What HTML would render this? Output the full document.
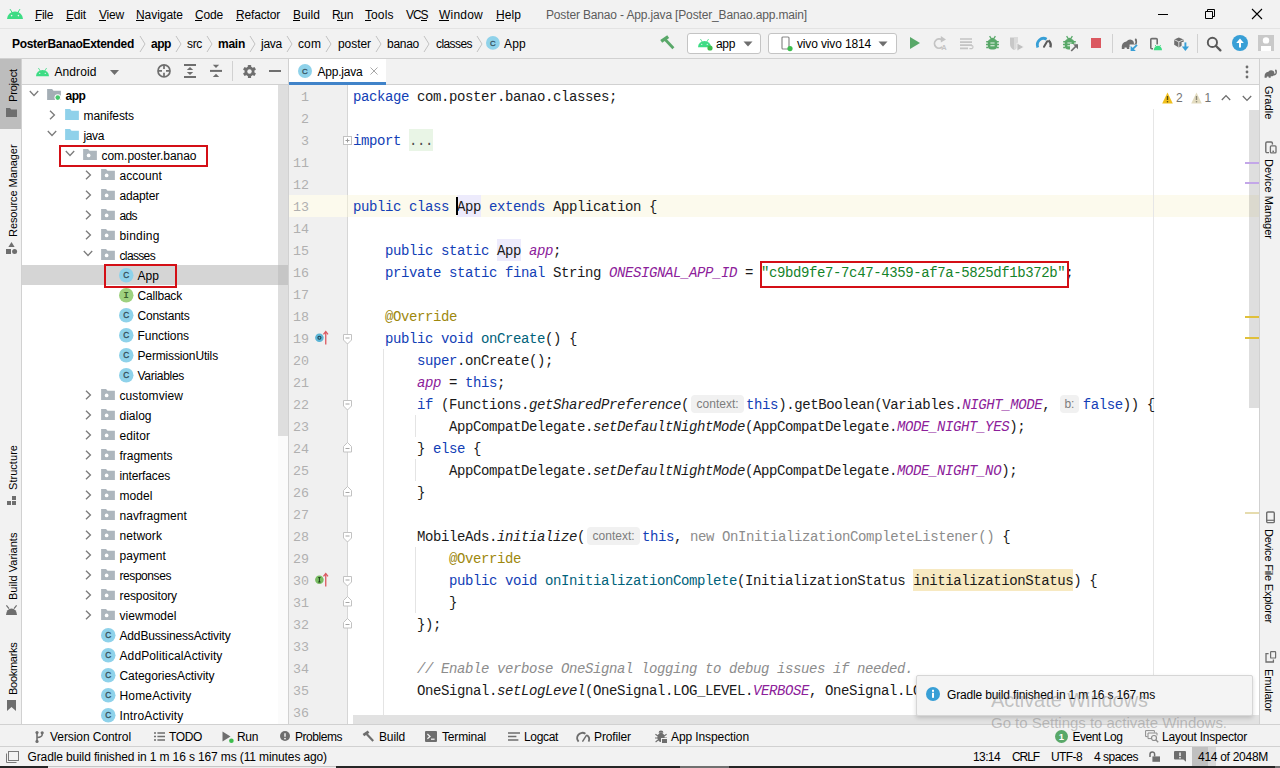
<!DOCTYPE html>
<html><head><meta charset="utf-8"><title>Poster Banao - App.java</title>
<style>
html,body{margin:0;padding:0;}
body{width:1280px;height:768px;overflow:hidden;background:#f2f2f2;position:relative;font-family:'Liberation Sans',sans-serif;font-size:12px;color:#000;}
.t{position:absolute;white-space:pre;line-height:20px;height:20px;}
.b{font-weight:bold;}
.u{text-decoration:underline;text-underline-offset:1px;text-decoration-thickness:1px;}
svg{position:absolute;overflow:visible;}
.cl{position:absolute;left:353px;height:22px;line-height:22px;white-space:pre;font-family:'Liberation Mono',monospace;font-size:14px;letter-spacing:-0.4px;color:#1a1a1a;}
.ln{position:absolute;left:289px;width:20px;text-align:right;height:22px;line-height:22px;font-family:'Liberation Mono',monospace;font-size:13.333px;color:#b0b0b0;}
.k{color:#1240b6;}
.s{color:#14832a;}
.f{color:#8c209a;font-style:italic;}
.a{color:#9e880d;}
.m{color:#00627a;}
.c{color:#8c8c8c;font-style:italic;}
.i{font-style:italic;}
.g{color:#8c8c8c;}
.hl{background:#edebfc;display:inline-block;height:22px;}
.hw{background:#f7e9c1;display:inline-block;height:22px;}
.fd{background:#e9f5e6;display:inline-block;height:22px;color:#4d4d4d;}
.g2{color:#4d4d4d;}
.ih{display:inline-block;box-sizing:border-box;height:18px;line-height:18px;vertical-align:top;margin-top:1.5px;background:#f1f1f1;border-radius:4px;color:#7d7d7d;font-family:'Liberation Sans',sans-serif;font-size:12px;text-align:center;overflow:hidden;letter-spacing:0;}
.vt{position:absolute;white-space:pre;line-height:20px;height:20px;transform-origin:0 0;}
</style></head><body>
<div style="position:absolute;left:0px;top:0px;width:1280px;height:28px;background:#f2f2f2;"></div>
<div style="position:absolute;left:0px;top:28px;width:1280px;height:1px;background:#e3e3e3;"></div>
<div style="position:absolute;left:0px;top:58px;width:1280px;height:1px;background:#d1d1d1;"></div>
<div style="position:absolute;left:0px;top:59px;width:21px;height:665px;background:#f2f2f2;"></div>
<div style="position:absolute;left:0px;top:59px;width:21px;height:70px;background:#bdbdbd;"></div>
<div style="position:absolute;left:21px;top:59px;width:1px;height:665px;background:#d1d1d1;"></div>
<div style="position:absolute;left:22px;top:85px;width:266px;height:639px;background:#ffffff;"></div>
<div style="position:absolute;left:22px;top:84px;width:266px;height:1px;background:#d1d1d1;"></div>
<div style="position:absolute;left:278px;top:85px;width:10px;height:639px;background:#fbfbfb;"></div>
<div style="position:absolute;left:278px;top:85px;width:10px;height:351px;background:#dedede;"></div>
<div style="position:absolute;left:288px;top:59px;width:1px;height:665px;background:#d1d1d1;"></div>
<div style="position:absolute;left:289px;top:59px;width:970px;height:26px;background:#f2f2f2;"></div>
<div style="position:absolute;left:289px;top:84px;width:970px;height:1px;background:#d1d1d1;"></div>
<div style="position:absolute;left:289px;top:59px;width:97px;height:26px;background:#ffffff;"></div>
<div style="position:absolute;left:289px;top:82px;width:97px;height:3px;background:#4083c9;"></div>
<div style="position:absolute;left:289px;top:85px;width:970px;height:639px;background:#ffffff;"></div>
<div style="position:absolute;left:289px;top:85px;width:58px;height:639px;background:#f0f0f0;"></div>
<div style="position:absolute;left:347px;top:85px;width:1px;height:639px;background:#d6d6d6;"></div>
<div style="position:absolute;left:289px;top:195px;width:970px;height:22px;background:#fcfaed;"></div>
<div style="position:absolute;left:347px;top:195px;width:1px;height:22px;background:#e8e6d8;"></div>
<div style="position:absolute;left:1153px;top:109px;width:1px;height:615px;background:#e6e6e6;"></div>
<div style="position:absolute;left:1259px;top:59px;width:1px;height:665px;background:#d1d1d1;"></div>
<div style="position:absolute;left:1260px;top:59px;width:20px;height:665px;background:#f2f2f2;"></div>
<div style="position:absolute;left:0px;top:724px;width:1280px;height:1px;background:#d1d1d1;"></div>
<div style="position:absolute;left:0px;top:725px;width:1280px;height:21px;background:#f2f2f2;"></div>
<div style="position:absolute;left:0px;top:746px;width:1280px;height:1px;background:#d1d1d1;"></div>
<div style="position:absolute;left:0px;top:747px;width:1280px;height:19px;background:#f2f2f2;"></div>
<div style="position:absolute;left:0px;top:766px;width:1280px;height:2px;background:#262626;"></div>
<div style="position:absolute;left:48px;top:766px;width:288px;height:1px;background:#c6c6c6;"></div>
<div style="position:absolute;left:48px;top:767px;width:288px;height:1px;background:#ececec;"></div>
<div style="position:absolute;left:680px;top:766px;width:49px;height:2px;background:#707070;"></div>
<div style="position:absolute;left:1275px;top:766px;width:5px;height:2px;background:#707070;"></div>
<svg style="left:7px;top:9px" width="16" height="10.0" viewBox="0 0 16 10"><path d="M0 10 A8 7.6 0 0 1 16 10 Z" fill="#3ddc84"/><path d="M3.2 0.4 L5.2 3.6 M12.8 0.4 L10.8 3.6" stroke="#3ddc84" stroke-width="1" stroke-linecap="round"/><circle cx="4.6" cy="6.6" r="0.8" fill="#f2f2f2"/><circle cx="11.4" cy="6.6" r="0.8" fill="#f2f2f2"/></svg>
<span class="t" style="left:35px;top:4.5px;letter-spacing:-0.336px;">File</span>
<span class="t" style="left:66px;top:4.5px;letter-spacing:-0.172px;">Edit</span>
<span class="t" style="left:99px;top:4.5px;letter-spacing:-0.199px;">View</span>
<span class="t" style="left:136px;top:4.5px;letter-spacing:-0.047px;">Navigate</span>
<span class="t" style="left:195px;top:4.5px;letter-spacing:-0.172px;">Code</span>
<span class="t" style="left:236px;top:4.5px;letter-spacing:-0.170px;">Refactor</span>
<span class="t" style="left:293px;top:4.5px;letter-spacing:0.062px;">Build</span>
<span class="t" style="left:332px;top:4.5px;letter-spacing:-0.339px;">Run</span>
<span class="t" style="left:365px;top:4.5px;letter-spacing:0.097px;">Tools</span>
<span class="t" style="left:406px;top:4.5px;letter-spacing:-1.062px;">VCS</span>
<span class="t" style="left:439px;top:4.5px;letter-spacing:0.219px;">Window</span>
<span class="t" style="left:496px;top:4.5px;letter-spacing:0.078px;">Help</span>
<div style="position:absolute;left:35px;top:20.3px;width:6px;height:1px;background:#000;"></div>
<div style="position:absolute;left:66px;top:20.3px;width:6px;height:1px;background:#000;"></div>
<div style="position:absolute;left:99px;top:20.3px;width:7px;height:1px;background:#000;"></div>
<div style="position:absolute;left:136px;top:20.3px;width:8px;height:1px;background:#000;"></div>
<div style="position:absolute;left:195px;top:20.3px;width:7px;height:1px;background:#000;"></div>
<div style="position:absolute;left:236px;top:20.3px;width:7px;height:1px;background:#000;"></div>
<div style="position:absolute;left:293px;top:20.3px;width:7px;height:1px;background:#000;"></div>
<div style="position:absolute;left:337px;top:20.3px;width:6px;height:1px;background:#000;"></div>
<div style="position:absolute;left:365px;top:20.3px;width:6px;height:1px;background:#000;"></div>
<div style="position:absolute;left:421px;top:20.3px;width:6px;height:1px;background:#000;"></div>
<div style="position:absolute;left:439px;top:20.3px;width:10px;height:1px;background:#000;"></div>
<div style="position:absolute;left:496px;top:20.3px;width:8px;height:1px;background:#000;"></div>
<span class="t" style="left:546px;top:4.5px;letter-spacing:-0.153px;color:#5c5c5c;">Poster Banao - App.java [Poster_Banao.app.main]</span>
<svg style="left:1157px;top:9px" width="12" height="12" viewBox="0 0 12 12"><path d="M1 5.5 H11" stroke="#000" stroke-width="1"/></svg>
<svg style="left:1204px;top:8px" width="12" height="12" viewBox="0 0 12 12"><path d="M1.5 3.5 H8.5 V10.5 H1.5 Z M3.5 3.5 V1.5 H10.5 V8.5 H8.5" fill="none" stroke="#000" stroke-width="1"/></svg>
<svg style="left:1251px;top:8px" width="12" height="12" viewBox="0 0 12 12"><path d="M1 1 L11 11 M11 1 L1 11" stroke="#000" stroke-width="1.1"/></svg>
<span class="t b" style="left:12px;top:33.8px;letter-spacing:-0.318px;">PosterBanaoExtended</span>
<span class="t b" style="left:151px;top:33.8px;letter-spacing:-0.448px;">app</span>
<span class="t" style="left:187px;top:33.8px;letter-spacing:-0.333px;">src</span>
<span class="t b" style="left:218px;top:33.8px;letter-spacing:-0.254px;">main</span>
<span class="t" style="left:261px;top:33.8px;letter-spacing:-0.254px;">java</span>
<span class="t" style="left:298px;top:33.8px;letter-spacing:0.109px;">com</span>
<span class="t" style="left:338px;top:33.8px;letter-spacing:-0.060px;">poster</span>
<span class="t" style="left:387px;top:33.8px;letter-spacing:-0.275px;">banao</span>
<span class="t" style="left:436px;top:33.8px;letter-spacing:-0.574px;">classes</span>
<svg style="left:139px;top:35px" width="7" height="18" viewBox="0 0 7 18"><path d="M1 1 L6 9 L1 17" fill="none" stroke="#c2c2c2" stroke-width="1"/></svg>
<svg style="left:175px;top:35px" width="7" height="18" viewBox="0 0 7 18"><path d="M1 1 L6 9 L1 17" fill="none" stroke="#c2c2c2" stroke-width="1"/></svg>
<svg style="left:206px;top:35px" width="7" height="18" viewBox="0 0 7 18"><path d="M1 1 L6 9 L1 17" fill="none" stroke="#c2c2c2" stroke-width="1"/></svg>
<svg style="left:249px;top:35px" width="7" height="18" viewBox="0 0 7 18"><path d="M1 1 L6 9 L1 17" fill="none" stroke="#c2c2c2" stroke-width="1"/></svg>
<svg style="left:286px;top:35px" width="7" height="18" viewBox="0 0 7 18"><path d="M1 1 L6 9 L1 17" fill="none" stroke="#c2c2c2" stroke-width="1"/></svg>
<svg style="left:325px;top:35px" width="7" height="18" viewBox="0 0 7 18"><path d="M1 1 L6 9 L1 17" fill="none" stroke="#c2c2c2" stroke-width="1"/></svg>
<svg style="left:375px;top:35px" width="7" height="18" viewBox="0 0 7 18"><path d="M1 1 L6 9 L1 17" fill="none" stroke="#c2c2c2" stroke-width="1"/></svg>
<svg style="left:423px;top:35px" width="7" height="18" viewBox="0 0 7 18"><path d="M1 1 L6 9 L1 17" fill="none" stroke="#c2c2c2" stroke-width="1"/></svg>
<svg style="left:476px;top:35px" width="7" height="18" viewBox="0 0 7 18"><path d="M1 1 L6 9 L1 17" fill="none" stroke="#c2c2c2" stroke-width="1"/></svg>
<svg style="left:486.2px;top:36.2px" width="13.8" height="13.8" viewBox="0 0 14 14"><circle cx="7" cy="7" r="7" fill="#8fd2ea"/><text x="7" y="9.8" text-anchor="middle" font-family="Liberation Sans, sans-serif" font-size="8" fill="#35505c" stroke="#35505c" stroke-width="0.3">C</text></svg>
<span class="t" style="left:504px;top:33.8px;letter-spacing:0.214px;">App</span>
<svg style="left:658px;top:33px" width="18" height="18" viewBox="0 0 18 18"><path d="M3.2 8.4 L10.2 3.6" stroke="#59a869" stroke-width="3.4"/><path d="M7.4 6.8 L15.4 15.2" stroke="#59a869" stroke-width="2.8"/></svg>
<div style="position:absolute;left:687px;top:33px;width:74px;height:21px;background:#fff;border:1px solid #c4c4c4;border-radius:3px;box-sizing:border-box;"></div>
<svg style="left:698px;top:38.5px" width="13" height="8.125" viewBox="0 0 16 10"><path d="M0 10 A8 7.6 0 0 1 16 10 Z" fill="#3ddc84"/><path d="M3.2 0.4 L5.2 3.6 M12.8 0.4 L10.8 3.6" stroke="#3ddc84" stroke-width="1" stroke-linecap="round"/><circle cx="4.6" cy="6.6" r="0.8" fill="#f2f2f2"/><circle cx="11.4" cy="6.6" r="0.8" fill="#f2f2f2"/></svg>
<svg style="left:707px;top:45px" width="6" height="6"><circle cx="3" cy="3" r="2.6" fill="#3dbd4d"/></svg>
<span class="t" style="left:716px;top:33.5px;letter-spacing:-0.344px;">app</span>
<svg style="left:743px;top:41px" width="10" height="6" viewBox="0 0 10 6"><path d="M0.5 0.5 H9.5 L5 5.5 Z" fill="#6e6e6e"/></svg>
<div style="position:absolute;left:768px;top:33px;width:129px;height:21px;background:#fff;border:1px solid #c4c4c4;border-radius:3px;box-sizing:border-box;"></div>
<svg style="left:781px;top:36px" width="12" height="16" viewBox="0 0 12 16"><rect x="1" y="1" width="7" height="12" rx="1" fill="#fff" stroke="#8a8a8a" stroke-width="1.2"/><circle cx="9" cy="12.6" r="2.6" fill="#3dbd4d"/></svg>
<span class="t" style="left:797px;top:33.5px;letter-spacing:-0.146px;">vivo vivo 1814</span>
<svg style="left:878px;top:41px" width="10" height="6" viewBox="0 0 10 6"><path d="M0.5 0.5 H9.5 L5 5.5 Z" fill="#6e6e6e"/></svg>
<svg style="left:910px;top:37px" width="10" height="12" viewBox="0 0 10 12"><path d="M0 0 L10 6 L0 12 Z" fill="#59a869"/></svg>
<svg style="left:933px;top:36px" width="14" height="14" viewBox="0 0 14 14"><path d="M9.6 3.6 A4.6 4.6 0 1 0 9.8 10.6" fill="none" stroke="#c4c4c4" stroke-width="1.8" transform="translate(-0.6 0.4)"/><path d="M7.8 0 L13 3.4 L7.8 6.6 Z" fill="#c4c4c4"/><text x="8.2" y="14" font-family="Liberation Sans, sans-serif" font-size="7.5" font-weight="bold" fill="#c4c4c4">A</text></svg>
<svg style="left:960px;top:38px" width="14" height="12" viewBox="0 0 14 12"><path d="M0 1 H12 M0 4.1 H12 M0 7.2 H12 M0 10.3 H8" stroke="#c4c4c4" stroke-width="1.7"/><path d="M9.4 10.6 H12 A1.6 1.6 0 0 0 12 7.6 H11" fill="none" stroke="#c4c4c4" stroke-width="1.1"/></svg>
<svg style="left:985.5px;top:36px" width="13" height="14" viewBox="0 0 13 14"><rect x="1.8" y="3" width="9.4" height="10.4" rx="3.6" fill="#59a869"/><path d="M3.6 0.2 L5.4 2.8 M9.4 0.2 L7.6 2.8" stroke="#59a869" stroke-width="1.3"/><path d="M4.2 3.4 A2.4 2.2 0 0 1 8.8 3.4 Z" fill="#59a869"/><path d="M0.2 5.8 H2.4 M12.8 5.8 H10.6 M0 8.6 H2.4 M13 8.6 H10.6 M0.2 11.4 H2.4 M12.8 11.4 H10.6" stroke="#59a869" stroke-width="1.5"/><path d="M4.4 7 H8.6 M4.4 9.8 H8.6" stroke="#eaf3ec" stroke-width="1.1"/></svg>
<svg style="left:1009px;top:36px" width="16" height="16" viewBox="0 0 16 16"><path d="M1 1.5 H9 V8 Q9 12 5 14 Q1 12 1 8 Z" fill="#c7c7c7"/><path d="M5 1.5 H9 V8 Q9 12 5 14 Z" fill="#dadada"/><path d="M8 7 L15 11 L8 15 Z" fill="#c0c0c0" stroke="#f2f2f2" stroke-width="0.8"/></svg>
<svg style="left:1036px;top:37px" width="16" height="11" viewBox="0 0 16 11"><path d="M1.8 10.4 A6.2 6.6 0 0 1 10.6 2.2" fill="none" stroke="#389fd6" stroke-width="2.8"/><path d="M12.4 3.4 A6.4 6.6 0 0 1 14.4 10.4" fill="none" stroke="#5a5a5a" stroke-width="2.4"/><path d="M8 9.8 L11.2 4.2" stroke="#5a5a5a" stroke-width="2" stroke-linecap="round"/></svg>
<svg style="left:1063px;top:36px" width="13" height="14" viewBox="0 0 13 14"><rect x="1.8" y="3" width="9.4" height="10.4" rx="3.6" fill="#59a869"/><path d="M3.6 0.2 L5.4 2.8 M9.4 0.2 L7.6 2.8" stroke="#59a869" stroke-width="1.3"/><path d="M4.2 3.4 A2.4 2.2 0 0 1 8.8 3.4 Z" fill="#59a869"/><path d="M0.2 5.8 H2.4 M12.8 5.8 H10.6 M0 8.6 H2.4 M13 8.6 H10.6 M0.2 11.4 H2.4 M12.8 11.4 H10.6" stroke="#59a869" stroke-width="1.5"/><path d="M4.4 7 H8.6 M4.4 9.8 H8.6" stroke="#eaf3ec" stroke-width="1.1"/></svg>
<svg style="left:1070px;top:43px" width="9" height="9" viewBox="0 0 9 9"><rect x="0" y="1" width="8" height="8" fill="#f2f2f2"/><path d="M1.2 8 L7 2.2" stroke="#6e6e6e" stroke-width="1.7"/><path d="M3 1.2 H8 V6.2 Z" fill="#6e6e6e"/></svg>
<div style="position:absolute;left:1091px;top:38px;width:10px;height:10px;background:#db5860;"></div>
<div style="position:absolute;left:1112px;top:34px;width:1px;height:19px;background:#d1d1d1;"></div>
<svg style="left:1121px;top:37.5px" width="17" height="14" viewBox="0 0 17 14"><path d="M0.8 11 Q0 4 5.4 3.4 Q8 0.6 11.4 2.2 Q13.2 3.4 13 6.2 Q14.8 6 14.4 3.6 Q13.4 2 14 0.8 Q15.2 0 15.8 1.2 Q16.6 4.4 15.6 6.4 Q14.4 8.4 12 8 Q10.4 9.4 8.4 9 L8.4 11 H6 L5.6 9.4 L3.6 9.4 L3.4 11 Z" fill="#6e6e6e"/><path d="M8.6 13.6 V6.4 L16.6 6.4 L16.6 9 L12 13.6 Z" fill="#f2f2f2"/><path d="M11.4 11.4 L16 6.8" stroke="#389fd6" stroke-width="1.9"/><path d="M9.6 7.8 V13 H14.8 Z" fill="#389fd6"/></svg>
<svg style="left:1149px;top:36.5px" width="14" height="14" viewBox="0 0 14 14"><rect x="1.8" y="1.6" width="6.4" height="10.2" rx="1" fill="none" stroke="#6e6e6e" stroke-width="1.6"/><rect x="4" y="7.4" width="10" height="6.6" fill="#f2f2f2"/><path d="M4.8 13.2 A4.1 4.4 0 0 1 13 13.2 Z" fill="#3ddc84"/><path d="M6.2 8 L7.2 9.6 M11.6 8 L10.6 9.6" stroke="#3ddc84" stroke-width="0.9"/></svg>
<svg style="left:1173.5px;top:36.5px" width="16" height="15" viewBox="0 0 16 15"><path d="M4.8 0.4 L9.6 2.6 L9.6 7.8 L4.8 10.4 L0.2 7.8 L0.2 2.6 Z" fill="#6e6e6e"/><path d="M0.2 2.6 L4.8 4.9 L9.6 2.6 M4.8 4.9 V10.4" stroke="#f2f2f2" stroke-width="0.8" fill="none"/><rect x="7.6" y="5" width="8" height="9.6" fill="#f2f2f2"/><path d="M11.4 5.4 V11" stroke="#389fd6" stroke-width="1.9"/><path d="M7.8 9.6 H15 L11.4 14 Z" fill="#389fd6"/></svg>
<div style="position:absolute;left:1197px;top:34px;width:1px;height:19px;background:#d1d1d1;"></div>
<svg style="left:1206px;top:36px" width="16" height="16" viewBox="0 0 16 16"><circle cx="6.4" cy="6.4" r="4.6" fill="none" stroke="#595959" stroke-width="1.9"/><path d="M9.8 9.8 L14.4 14.4" stroke="#595959" stroke-width="2.3" stroke-linecap="round"/></svg>
<svg style="left:1232px;top:35px" width="16" height="16" viewBox="0 0 16 16"><circle cx="8" cy="8" r="8" fill="#389fd6"/><path d="M8 12.4 V6" stroke="#fff" stroke-width="2"/><path d="M4.2 8 L8 3.6 L11.8 8 Z" fill="#fff"/></svg>
<svg style="left:1258px;top:35px" width="16" height="16" viewBox="0 0 16 16"><rect width="16" height="16" fill="#c9c9c9"/><circle cx="8" cy="5.4" r="3.2" fill="#fff"/><path d="M3 16 V11 H13 V16 Z" fill="#fff"/></svg>
<svg style="left:35.5px;top:67.5px" width="13" height="8.125" viewBox="0 0 16 10"><path d="M0 10 A8 7.6 0 0 1 16 10 Z" fill="#3ddc84"/><path d="M3.2 0.4 L5.2 3.6 M12.8 0.4 L10.8 3.6" stroke="#3ddc84" stroke-width="1" stroke-linecap="round"/><circle cx="4.6" cy="6.6" r="0.8" fill="#f2f2f2"/><circle cx="11.4" cy="6.6" r="0.8" fill="#f2f2f2"/></svg>
<span class="t" style="left:54.5px;top:61.5px;letter-spacing:0.089px;">Android</span>
<svg style="left:109.5px;top:69.5px" width="9" height="5" viewBox="0 0 9 5"><path d="M0 0 H9 L4.5 5 Z" fill="#6e6e6e"/></svg>
<svg style="left:157px;top:64px" width="14" height="14" viewBox="0 0 14 14"><circle cx="7" cy="6.9" r="6" fill="none" stroke="#6e6e6e" stroke-width="1.7"/><path d="M7 1 V5 M7 8.8 V12.8 M1 6.9 H5 M9 6.9 H13" stroke="#6e6e6e" stroke-width="1.7"/></svg>
<svg style="left:184px;top:64px" width="12" height="14" viewBox="0 0 12 14"><path d="M0 0.95 H12 M0 12.95 H12" stroke="#6e6e6e" stroke-width="1.9"/><path d="M2.8 6 L6 3 L9.2 6 Z M2.8 8 L6 11 L9.2 8 Z" fill="#6e6e6e"/></svg>
<svg style="left:210px;top:64px" width="12" height="14" viewBox="0 0 12 14"><path d="M0 6.9 H12" stroke="#6e6e6e" stroke-width="2"/><path d="M2.8 0.8 L6 4 L9.2 0.8 Z M2.8 13 L6 9.8 L9.2 13 Z" fill="#6e6e6e"/></svg>
<div style="position:absolute;left:232px;top:61px;width:1px;height:20px;background:#d1d1d1;"></div>
<svg style="left:241.6px;top:63.6px" width="15" height="15" viewBox="0 0 15 15"><g fill="#6e6e6e"><circle cx="7.5" cy="7.5" r="4.9"/><rect x="5.9" y="0.9" width="3.2" height="13.2" rx="0.7"/><rect x="5.9" y="0.9" width="3.2" height="13.2" rx="0.7" transform="rotate(60 7.5 7.5)"/><rect x="5.9" y="0.9" width="3.2" height="13.2" rx="0.7" transform="rotate(120 7.5 7.5)"/></g><circle cx="7.5" cy="7.5" r="2.2" fill="#f2f2f2"/></svg>
<div style="position:absolute;left:269px;top:70px;width:12px;height:2px;background:#6e6e6e;"></div>
<svg style="left:298px;top:64px" width="14" height="14" viewBox="0 0 14 14"><circle cx="7" cy="7" r="7" fill="#8fd2ea"/><text x="7" y="9.8" text-anchor="middle" font-family="Liberation Sans, sans-serif" font-size="8" fill="#35505c" stroke="#35505c" stroke-width="0.3">C</text></svg>
<span class="t" style="left:317.5px;top:61.5px;letter-spacing:-0.213px;">App.java</span>
<svg style="left:370px;top:67px" width="8" height="8" viewBox="0 0 8 8"><path d="M0.5 0.5 L7.5 7.5 M7.5 0.5 L0.5 7.5" stroke="#a8a8a8" stroke-width="1"/></svg>
<svg style="left:1245px;top:65px" width="4" height="14" viewBox="0 0 4 14"><circle cx="2" cy="2" r="1.4" fill="#6e6e6e"/><circle cx="2" cy="7" r="1.4" fill="#6e6e6e"/><circle cx="2" cy="12" r="1.4" fill="#6e6e6e"/></svg>
<div style="position:absolute;left:22px;top:265px;width:266px;height:20px;background:#d5d5d5;"></div>
<div style="position:absolute;left:278px;top:265px;width:10px;height:20px;background:#c6c6c6;"></div>
<svg style="left:29px;top:90px" width="10" height="7" viewBox="0 0 10 7"><path d="M0.8 1 L5 5.4 L9.2 1" fill="none" stroke="#7c7c7c" stroke-width="1.35"/></svg>
<svg style="left:47px;top:89.0px" width="14" height="11" viewBox="0 0 15 12"><path d="M0 0 H5.4 L7 2 H15 V12 H0 Z" fill="#a4aeb5"/><circle cx="11.6" cy="9.4" r="3.6" fill="#fff"/><circle cx="11.6" cy="9.4" r="2.5" fill="#45c86c"/></svg>
<span class="t b" style="left:65.5px;top:86px;letter-spacing:-0.448px;">app</span>
<svg style="left:49px;top:110px" width="7" height="10" viewBox="0 0 7 10"><path d="M1 0.8 L5.4 5 L1 9.2" fill="none" stroke="#7c7c7c" stroke-width="1.35"/></svg>
<svg style="left:65px;top:109.0px" width="14" height="11" viewBox="0 0 15 12"><path d="M0 0 H5.4 L7 2 H15 V12 H0 Z" fill="#8fd1ea"/></svg>
<span class="t" style="left:83.5px;top:106px;letter-spacing:-0.095px;">manifests</span>
<svg style="left:47px;top:130px" width="10" height="7" viewBox="0 0 10 7"><path d="M0.8 1 L5 5.4 L9.2 1" fill="none" stroke="#7c7c7c" stroke-width="1.35"/></svg>
<svg style="left:65px;top:129.0px" width="14" height="11" viewBox="0 0 15 12"><path d="M0 0 H5.4 L7 2 H15 V12 H0 Z" fill="#8fd1ea"/></svg>
<span class="t" style="left:83.5px;top:126px;letter-spacing:-0.379px;">java</span>
<svg style="left:65px;top:150px" width="10" height="7" viewBox="0 0 10 7"><path d="M0.8 1 L5 5.4 L9.2 1" fill="none" stroke="#7c7c7c" stroke-width="1.35"/></svg>
<svg style="left:83px;top:149.0px" width="14" height="11" viewBox="0 0 15 12"><path d="M0 0 H5.4 L7 2 H15 V12 H0 Z" fill="#adb6bd"/><circle cx="6" cy="7" r="2" fill="#fff"/></svg>
<span class="t" style="left:101.5px;top:146px;letter-spacing:-0.025px;">com.poster.banao</span>
<svg style="left:85px;top:170px" width="7" height="10" viewBox="0 0 7 10"><path d="M1 0.8 L5.4 5 L1 9.2" fill="none" stroke="#7c7c7c" stroke-width="1.35"/></svg>
<svg style="left:101px;top:169.0px" width="14" height="11" viewBox="0 0 15 12"><path d="M0 0 H5.4 L7 2 H15 V12 H0 Z" fill="#adb6bd"/><circle cx="6" cy="7" r="2" fill="#fff"/></svg>
<span class="t" style="left:119.5px;top:166px;letter-spacing:0.067px;">account</span>
<svg style="left:85px;top:190px" width="7" height="10" viewBox="0 0 7 10"><path d="M1 0.8 L5.4 5 L1 9.2" fill="none" stroke="#7c7c7c" stroke-width="1.35"/></svg>
<svg style="left:101px;top:189.0px" width="14" height="11" viewBox="0 0 15 12"><path d="M0 0 H5.4 L7 2 H15 V12 H0 Z" fill="#adb6bd"/><circle cx="6" cy="7" r="2" fill="#fff"/></svg>
<span class="t" style="left:119.5px;top:186px;letter-spacing:-0.172px;">adapter</span>
<svg style="left:85px;top:210px" width="7" height="10" viewBox="0 0 7 10"><path d="M1 0.8 L5.4 5 L1 9.2" fill="none" stroke="#7c7c7c" stroke-width="1.35"/></svg>
<svg style="left:101px;top:209.0px" width="14" height="11" viewBox="0 0 15 12"><path d="M0 0 H5.4 L7 2 H15 V12 H0 Z" fill="#adb6bd"/><circle cx="6" cy="7" r="2" fill="#fff"/></svg>
<span class="t" style="left:119.5px;top:206px;letter-spacing:-0.620px;">ads</span>
<svg style="left:85px;top:230px" width="7" height="10" viewBox="0 0 7 10"><path d="M1 0.8 L5.4 5 L1 9.2" fill="none" stroke="#7c7c7c" stroke-width="1.35"/></svg>
<svg style="left:101px;top:229.0px" width="14" height="11" viewBox="0 0 15 12"><path d="M0 0 H5.4 L7 2 H15 V12 H0 Z" fill="#adb6bd"/><circle cx="6" cy="7" r="2" fill="#fff"/></svg>
<span class="t" style="left:119.5px;top:226px;letter-spacing:0.185px;">binding</span>
<svg style="left:83px;top:250px" width="10" height="7" viewBox="0 0 10 7"><path d="M0.8 1 L5 5.4 L9.2 1" fill="none" stroke="#7c7c7c" stroke-width="1.35"/></svg>
<svg style="left:101px;top:249.0px" width="14" height="11" viewBox="0 0 15 12"><path d="M0 0 H5.4 L7 2 H15 V12 H0 Z" fill="#adb6bd"/><circle cx="6" cy="7" r="2" fill="#fff"/></svg>
<span class="t" style="left:119.5px;top:246px;letter-spacing:-0.645px;">classes</span>
<svg style="left:118.7px;top:268.3px" width="14.5" height="14.5" viewBox="0 0 14 14"><circle cx="7" cy="7" r="7" fill="#8fd2ea"/><text x="7" y="9.8" text-anchor="middle" font-family="Liberation Sans, sans-serif" font-size="8" fill="#35505c" stroke="#35505c" stroke-width="0.3">C</text></svg>
<span class="t" style="left:137.5px;top:266px;letter-spacing:0.047px;">App</span>
<svg style="left:118.7px;top:288.3px" width="14.5" height="14.5" viewBox="0 0 14 14"><circle cx="7" cy="7" r="7" fill="#9ed17f"/><text x="7" y="9.9" text-anchor="middle" font-family="Liberation Mono, monospace" font-size="8.5" font-weight="bold" fill="#3a5f2b">I</text></svg>
<span class="t" style="left:137.5px;top:286px;letter-spacing:-0.191px;">Callback</span>
<svg style="left:118.7px;top:308.3px" width="14.5" height="14.5" viewBox="0 0 14 14"><circle cx="7" cy="7" r="7" fill="#8fd2ea"/><text x="7" y="9.8" text-anchor="middle" font-family="Liberation Sans, sans-serif" font-size="8" fill="#35505c" stroke="#35505c" stroke-width="0.3">C</text></svg>
<span class="t" style="left:137.5px;top:306px;letter-spacing:-0.226px;">Constants</span>
<svg style="left:118.7px;top:328.3px" width="14.5" height="14.5" viewBox="0 0 14 14"><circle cx="7" cy="7" r="7" fill="#8fd2ea"/><text x="7" y="9.8" text-anchor="middle" font-family="Liberation Sans, sans-serif" font-size="8" fill="#35505c" stroke="#35505c" stroke-width="0.3">C</text></svg>
<span class="t" style="left:137.5px;top:326px;letter-spacing:-0.059px;">Functions</span>
<svg style="left:118.7px;top:348.3px" width="14.5" height="14.5" viewBox="0 0 14 14"><circle cx="7" cy="7" r="7" fill="#8fd2ea"/><text x="7" y="9.8" text-anchor="middle" font-family="Liberation Sans, sans-serif" font-size="8" fill="#35505c" stroke="#35505c" stroke-width="0.3">C</text></svg>
<span class="t" style="left:137.5px;top:346px;letter-spacing:-0.146px;">PermissionUtils</span>
<svg style="left:118.7px;top:368.3px" width="14.5" height="14.5" viewBox="0 0 14 14"><circle cx="7" cy="7" r="7" fill="#8fd2ea"/><text x="7" y="9.8" text-anchor="middle" font-family="Liberation Sans, sans-serif" font-size="8" fill="#35505c" stroke="#35505c" stroke-width="0.3">C</text></svg>
<span class="t" style="left:137.5px;top:366px;letter-spacing:-0.293px;">Variables</span>
<svg style="left:85px;top:390px" width="7" height="10" viewBox="0 0 7 10"><path d="M1 0.8 L5.4 5 L1 9.2" fill="none" stroke="#7c7c7c" stroke-width="1.35"/></svg>
<svg style="left:101px;top:389.0px" width="14" height="11" viewBox="0 0 15 12"><path d="M0 0 H5.4 L7 2 H15 V12 H0 Z" fill="#adb6bd"/><circle cx="6" cy="7" r="2" fill="#fff"/></svg>
<span class="t" style="left:119.5px;top:386px;letter-spacing:0.081px;">customview</span>
<svg style="left:85px;top:410px" width="7" height="10" viewBox="0 0 7 10"><path d="M1 0.8 L5.4 5 L1 9.2" fill="none" stroke="#7c7c7c" stroke-width="1.35"/></svg>
<svg style="left:101px;top:409.0px" width="14" height="11" viewBox="0 0 15 12"><path d="M0 0 H5.4 L7 2 H15 V12 H0 Z" fill="#adb6bd"/><circle cx="6" cy="7" r="2" fill="#fff"/></svg>
<span class="t" style="left:119.5px;top:406px;letter-spacing:-0.005px;">dialog</span>
<svg style="left:85px;top:430px" width="7" height="10" viewBox="0 0 7 10"><path d="M1 0.8 L5.4 5 L1 9.2" fill="none" stroke="#7c7c7c" stroke-width="1.35"/></svg>
<svg style="left:101px;top:429.0px" width="14" height="11" viewBox="0 0 15 12"><path d="M0 0 H5.4 L7 2 H15 V12 H0 Z" fill="#adb6bd"/><circle cx="6" cy="7" r="2" fill="#fff"/></svg>
<span class="t" style="left:119.5px;top:426px;letter-spacing:0.078px;">editor</span>
<svg style="left:85px;top:450px" width="7" height="10" viewBox="0 0 7 10"><path d="M1 0.8 L5.4 5 L1 9.2" fill="none" stroke="#7c7c7c" stroke-width="1.35"/></svg>
<svg style="left:101px;top:449.0px" width="14" height="11" viewBox="0 0 15 12"><path d="M0 0 H5.4 L7 2 H15 V12 H0 Z" fill="#adb6bd"/><circle cx="6" cy="7" r="2" fill="#fff"/></svg>
<span class="t" style="left:119.5px;top:446px;letter-spacing:-0.040px;">fragments</span>
<svg style="left:85px;top:470px" width="7" height="10" viewBox="0 0 7 10"><path d="M1 0.8 L5.4 5 L1 9.2" fill="none" stroke="#7c7c7c" stroke-width="1.35"/></svg>
<svg style="left:101px;top:469.0px" width="14" height="11" viewBox="0 0 15 12"><path d="M0 0 H5.4 L7 2 H15 V12 H0 Z" fill="#adb6bd"/><circle cx="6" cy="7" r="2" fill="#fff"/></svg>
<span class="t" style="left:119.5px;top:466px;letter-spacing:-0.153px;">interfaces</span>
<svg style="left:85px;top:490px" width="7" height="10" viewBox="0 0 7 10"><path d="M1 0.8 L5.4 5 L1 9.2" fill="none" stroke="#7c7c7c" stroke-width="1.35"/></svg>
<svg style="left:101px;top:489.0px" width="14" height="11" viewBox="0 0 15 12"><path d="M0 0 H5.4 L7 2 H15 V12 H0 Z" fill="#adb6bd"/><circle cx="6" cy="7" r="2" fill="#fff"/></svg>
<span class="t" style="left:119.5px;top:486px;letter-spacing:0.062px;">model</span>
<svg style="left:85px;top:510px" width="7" height="10" viewBox="0 0 7 10"><path d="M1 0.8 L5.4 5 L1 9.2" fill="none" stroke="#7c7c7c" stroke-width="1.35"/></svg>
<svg style="left:101px;top:509.0px" width="14" height="11" viewBox="0 0 15 12"><path d="M0 0 H5.4 L7 2 H15 V12 H0 Z" fill="#adb6bd"/><circle cx="6" cy="7" r="2" fill="#fff"/></svg>
<span class="t" style="left:119.5px;top:506px;letter-spacing:0.072px;">navfragment</span>
<svg style="left:85px;top:530px" width="7" height="10" viewBox="0 0 7 10"><path d="M1 0.8 L5.4 5 L1 9.2" fill="none" stroke="#7c7c7c" stroke-width="1.35"/></svg>
<svg style="left:101px;top:529.0px" width="14" height="11" viewBox="0 0 15 12"><path d="M0 0 H5.4 L7 2 H15 V12 H0 Z" fill="#adb6bd"/><circle cx="6" cy="7" r="2" fill="#fff"/></svg>
<span class="t" style="left:119.5px;top:526px;letter-spacing:0.067px;">network</span>
<svg style="left:85px;top:550px" width="7" height="10" viewBox="0 0 7 10"><path d="M1 0.8 L5.4 5 L1 9.2" fill="none" stroke="#7c7c7c" stroke-width="1.35"/></svg>
<svg style="left:101px;top:549.0px" width="14" height="11" viewBox="0 0 15 12"><path d="M0 0 H5.4 L7 2 H15 V12 H0 Z" fill="#adb6bd"/><circle cx="6" cy="7" r="2" fill="#fff"/></svg>
<span class="t" style="left:119.5px;top:546px;letter-spacing:0.067px;">payment</span>
<svg style="left:85px;top:570px" width="7" height="10" viewBox="0 0 7 10"><path d="M1 0.8 L5.4 5 L1 9.2" fill="none" stroke="#7c7c7c" stroke-width="1.35"/></svg>
<svg style="left:101px;top:569.0px" width="14" height="11" viewBox="0 0 15 12"><path d="M0 0 H5.4 L7 2 H15 V12 H0 Z" fill="#adb6bd"/><circle cx="6" cy="7" r="2" fill="#fff"/></svg>
<span class="t" style="left:119.5px;top:566px;letter-spacing:-0.431px;">responses</span>
<svg style="left:85px;top:590px" width="7" height="10" viewBox="0 0 7 10"><path d="M1 0.8 L5.4 5 L1 9.2" fill="none" stroke="#7c7c7c" stroke-width="1.35"/></svg>
<svg style="left:101px;top:589.0px" width="14" height="11" viewBox="0 0 15 12"><path d="M0 0 H5.4 L7 2 H15 V12 H0 Z" fill="#adb6bd"/><circle cx="6" cy="7" r="2" fill="#fff"/></svg>
<span class="t" style="left:119.5px;top:586px;letter-spacing:-0.108px;">respository</span>
<svg style="left:85px;top:610px" width="7" height="10" viewBox="0 0 7 10"><path d="M1 0.8 L5.4 5 L1 9.2" fill="none" stroke="#7c7c7c" stroke-width="1.35"/></svg>
<svg style="left:101px;top:609.0px" width="14" height="11" viewBox="0 0 15 12"><path d="M0 0 H5.4 L7 2 H15 V12 H0 Z" fill="#adb6bd"/><circle cx="6" cy="7" r="2" fill="#fff"/></svg>
<span class="t" style="left:119.5px;top:606px;letter-spacing:0.033px;">viewmodel</span>
<svg style="left:100.7px;top:628.3px" width="14.5" height="14.5" viewBox="0 0 14 14"><circle cx="7" cy="7" r="7" fill="#8fd2ea"/><text x="7" y="9.8" text-anchor="middle" font-family="Liberation Sans, sans-serif" font-size="8" fill="#35505c" stroke="#35505c" stroke-width="0.3">C</text></svg>
<span class="t" style="left:119.5px;top:626px;letter-spacing:-0.152px;">AddBussinessActivity</span>
<svg style="left:100.7px;top:648.3px" width="14.5" height="14.5" viewBox="0 0 14 14"><circle cx="7" cy="7" r="7" fill="#8fd2ea"/><text x="7" y="9.8" text-anchor="middle" font-family="Liberation Sans, sans-serif" font-size="8" fill="#35505c" stroke="#35505c" stroke-width="0.3">C</text></svg>
<span class="t" style="left:119.5px;top:646px;letter-spacing:0.114px;">AddPoliticalActivity</span>
<svg style="left:100.7px;top:668.3px" width="14.5" height="14.5" viewBox="0 0 14 14"><circle cx="7" cy="7" r="7" fill="#8fd2ea"/><text x="7" y="9.8" text-anchor="middle" font-family="Liberation Sans, sans-serif" font-size="8" fill="#35505c" stroke="#35505c" stroke-width="0.3">C</text></svg>
<span class="t" style="left:119.5px;top:666px;letter-spacing:-0.058px;">CategoriesActivity</span>
<svg style="left:100.7px;top:688.3px" width="14.5" height="14.5" viewBox="0 0 14 14"><circle cx="7" cy="7" r="7" fill="#8fd2ea"/><text x="7" y="9.8" text-anchor="middle" font-family="Liberation Sans, sans-serif" font-size="8" fill="#35505c" stroke="#35505c" stroke-width="0.3">C</text></svg>
<span class="t" style="left:119.5px;top:686px;letter-spacing:0.165px;">HomeActivity</span>
<svg style="left:100.7px;top:708.3px" width="14.5" height="14.5" viewBox="0 0 14 14"><circle cx="7" cy="7" r="7" fill="#8fd2ea"/><text x="7" y="9.8" text-anchor="middle" font-family="Liberation Sans, sans-serif" font-size="8" fill="#35505c" stroke="#35505c" stroke-width="0.3">C</text></svg>
<span class="t" style="left:119.5px;top:706px;letter-spacing:0.153px;">IntroActivity</span>
<div style="position:absolute;left:59px;top:145px;width:149px;height:22px;border:2px solid #d40f16;box-sizing:border-box;"></div>
<div style="position:absolute;left:104px;top:264px;width:73px;height:23.5px;border:2px solid #d40f16;box-sizing:border-box;"></div>
<div style="position:absolute;left:409px;top:129px;width:24px;height:22px;background:#e9f5e6;"></div>
<div style="position:absolute;left:457px;top:195px;width:24px;height:22px;background:#edebfc;"></div>
<div style="position:absolute;left:497px;top:239px;width:24px;height:22px;background:#edebfc;"></div>
<div style="position:absolute;left:913px;top:569px;width:160px;height:22px;background:#f7e9c1;"></div>
<div style="position:absolute;left:383px;top:349px;width:1px;height:375px;background:#e4e4e4;"></div>
<div style="position:absolute;left:415px;top:415px;width:1px;height:22px;background:#e4e4e4;"></div>
<div style="position:absolute;left:415px;top:459px;width:1px;height:22px;background:#e4e4e4;"></div>
<div style="position:absolute;left:415px;top:547px;width:1px;height:66px;background:#e4e4e4;"></div>
<div style="position:absolute;left:289px;top:85px;width:970px;height:639px;overflow:hidden;">
<div class="ln" style="left:0;top:1.5px">1</div>
<div class="cl" style="left:64px;top:0.5px"><span class="k">package</span> com.poster.banao.classes;</div>
<div class="ln" style="left:0;top:23.5px">2</div>
<div class="ln" style="left:0;top:45.5px">3</div>
<div class="cl" style="left:64px;top:44.5px"><span class="k">import</span> <span class="g2">...</span></div>
<div class="ln" style="left:0;top:67.5px">11</div>
<div class="ln" style="left:0;top:89.5px">12</div>
<div class="ln" style="left:0;top:111.5px">13</div>
<div class="cl" style="left:64px;top:110.5px"><span class="k">public class </span>App<span class="k"> extends </span>Application {</div>
<div class="ln" style="left:0;top:133.5px">14</div>
<div class="ln" style="left:0;top:155.5px">15</div>
<div class="cl" style="left:64px;top:154.5px">    <span class="k">public static </span>App <span class="f">app</span>;</div>
<div class="ln" style="left:0;top:177.5px">16</div>
<div class="cl" style="left:64px;top:176.5px">    <span class="k">private static final </span>String <span class="f">ONESIGNAL_APP_ID</span> = <span class="s">&quot;c9bd9fe7-7c47-4359-af7a-5825df1b372b&quot;</span>;</div>
<div class="ln" style="left:0;top:199.5px">17</div>
<div class="ln" style="left:0;top:221.5px">18</div>
<div class="cl" style="left:64px;top:220.5px">    <span class="a">@Override</span></div>
<div class="ln" style="left:0;top:243.5px">19</div>
<div class="cl" style="left:64px;top:242.5px">    <span class="k">public void </span><span class="m">onCreate</span>() {</div>
<div class="ln" style="left:0;top:265.5px">20</div>
<div class="cl" style="left:64px;top:264.5px">        <span class="k">super</span>.onCreate();</div>
<div class="ln" style="left:0;top:287.5px">21</div>
<div class="cl" style="left:64px;top:286.5px">        <span class="f">app</span> = <span class="k">this</span>;</div>
<div class="ln" style="left:0;top:309.5px">22</div>
<div class="cl" style="left:64px;top:308.5px">        <span class="k">if</span> (Functions.<span class="i">getSharedPreference</span>(<span class="ih" style="width:53px;margin-left:2px;margin-right:2px;">context:</span><span class="k">this</span>).getBoolean(Variables.<span class="f">NIGHT_MODE</span>, <span class="ih" style="width:18.5px;margin-left:2px;margin-right:4px;">b:</span><span class="k">false</span>)) {</div>
<div class="ln" style="left:0;top:331.5px">23</div>
<div class="cl" style="left:64px;top:330.5px">            AppCompatDelegate.<span class="i">setDefaultNightMode</span>(AppCompatDelegate.<span class="f">MODE_NIGHT_YES</span>);</div>
<div class="ln" style="left:0;top:353.5px">24</div>
<div class="cl" style="left:64px;top:352.5px">        } <span class="k">else</span> {</div>
<div class="ln" style="left:0;top:375.5px">25</div>
<div class="cl" style="left:64px;top:374.5px">            AppCompatDelegate.<span class="i">setDefaultNightMode</span>(AppCompatDelegate.<span class="f">MODE_NIGHT_NO</span>);</div>
<div class="ln" style="left:0;top:397.5px">26</div>
<div class="cl" style="left:64px;top:396.5px">        }</div>
<div class="ln" style="left:0;top:419.5px">27</div>
<div class="ln" style="left:0;top:441.5px">28</div>
<div class="cl" style="left:64px;top:440.5px">        MobileAds.<span class="i">initialize</span>(<span class="ih" style="width:53px;margin-left:2px;margin-right:2px;">context:</span><span class="k">this</span>, <span class="g">new OnInitializationCompleteListener()</span> {</div>
<div class="ln" style="left:0;top:463.5px">29</div>
<div class="cl" style="left:64px;top:462.5px">            <span class="a">@Override</span></div>
<div class="ln" style="left:0;top:485.5px">30</div>
<div class="cl" style="left:64px;top:484.5px">            <span class="k">public void </span><span class="m">onInitializationComplete</span>(InitializationStatus initializationStatus) {</div>
<div class="ln" style="left:0;top:507.5px">31</div>
<div class="cl" style="left:64px;top:506.5px">            }</div>
<div class="ln" style="left:0;top:529.5px">32</div>
<div class="cl" style="left:64px;top:528.5px">        });</div>
<div class="ln" style="left:0;top:551.5px">33</div>
<div class="ln" style="left:0;top:573.5px">34</div>
<div class="cl" style="left:64px;top:572.5px">        <span class="c">// Enable verbose OneSignal logging to debug issues if needed.</span></div>
<div class="ln" style="left:0;top:595.5px">35</div>
<div class="cl" style="left:64px;top:594.5px">        OneSignal.<span class="i">setLogLevel</span>(OneSignal.LOG_LEVEL.<span class="f">VERBOSE</span>, OneSignal.LOG_LEVEL.<span class="f">NONE</span>);</div>
<div class="ln" style="left:0;top:617.5px">36</div>
</div>
<div style="position:absolute;left:456px;top:197px;width:2px;height:18px;background:#000;"></div>
<svg style="left:343px;top:136.2px" width="9" height="9" viewBox="0 0 9 9"><rect x="0.5" y="0.5" width="8" height="8" fill="#fff" stroke="#c2c2c2"/><path d="M2.5 4.5 H6.5 M4.5 2.5 V6.5" stroke="#9a9a9a" stroke-width="1"/></svg>
<svg style="left:343px;top:334.4px" width="9" height="10.5" viewBox="0 0 9 10.5"><path d="M0.5 0.5 H8.5 V6 L4.5 10 L0.5 6 Z" fill="#fff" stroke="#c2c2c2"/><path d="M2.5 4 H6.5" stroke="#a6a6a6" stroke-width="1"/></svg>
<svg style="left:343px;top:400.4px" width="9" height="10.5" viewBox="0 0 9 10.5"><path d="M0.5 0.5 H8.5 V6 L4.5 10 L0.5 6 Z" fill="#fff" stroke="#c2c2c2"/><path d="M2.5 4 H6.5" stroke="#a6a6a6" stroke-width="1"/></svg>
<svg style="left:343px;top:532.4px" width="9" height="10.5" viewBox="0 0 9 10.5"><path d="M0.5 0.5 H8.5 V6 L4.5 10 L0.5 6 Z" fill="#fff" stroke="#c2c2c2"/><path d="M2.5 4 H6.5" stroke="#a6a6a6" stroke-width="1"/></svg>
<svg style="left:343px;top:576.4px" width="9" height="10.5" viewBox="0 0 9 10.5"><path d="M0.5 0.5 H8.5 V6 L4.5 10 L0.5 6 Z" fill="#fff" stroke="#c2c2c2"/><path d="M2.5 4 H6.5" stroke="#a6a6a6" stroke-width="1"/></svg>
<svg style="left:343px;top:441.9px" width="9" height="10.5" viewBox="0 0 9 10.5"><path d="M0.5 10 H8.5 V4.5 L4.5 0.5 L0.5 4.5 Z" fill="#fff" stroke="#c2c2c2"/><path d="M2.5 6.5 H6.5" stroke="#a6a6a6" stroke-width="1"/></svg>
<svg style="left:343px;top:485.9px" width="9" height="10.5" viewBox="0 0 9 10.5"><path d="M0.5 10 H8.5 V4.5 L4.5 0.5 L0.5 4.5 Z" fill="#fff" stroke="#c2c2c2"/><path d="M2.5 6.5 H6.5" stroke="#a6a6a6" stroke-width="1"/></svg>
<svg style="left:343px;top:595.9px" width="9" height="10.5" viewBox="0 0 9 10.5"><path d="M0.5 10 H8.5 V4.5 L4.5 0.5 L0.5 4.5 Z" fill="#fff" stroke="#c2c2c2"/><path d="M2.5 6.5 H6.5" stroke="#a6a6a6" stroke-width="1"/></svg>
<svg style="left:343px;top:617.9px" width="9" height="10.5" viewBox="0 0 9 10.5"><path d="M0.5 10 H8.5 V4.5 L4.5 0.5 L0.5 4.5 Z" fill="#fff" stroke="#c2c2c2"/><path d="M2.5 6.5 H6.5" stroke="#a6a6a6" stroke-width="1"/></svg>
<svg style="left:315px;top:331px" width="14" height="14" viewBox="0 0 14 14"><circle cx="4.4" cy="6.8" r="4.3" fill="#5bb5d6"/><circle cx="4.4" cy="6.8" r="1.5" fill="none" stroke="#23404d" stroke-width="1.1"/><path d="M10.75 13.4 V1" stroke="#db5860" stroke-width="1.3"/><path d="M8.5 3.4 L10.75 0.6 L13 3.4" fill="none" stroke="#db5860" stroke-width="1.3"/></svg>
<svg style="left:315px;top:573px" width="14" height="14" viewBox="0 0 14 14"><circle cx="4.4" cy="6.8" r="4.3" fill="#78bd62"/><path d="M4.4 4.6 V9 M3.2 4.6 H5.6 M3.2 9 H5.6" stroke="#20401a" stroke-width="1"/><path d="M10.75 13.4 V1" stroke="#db5860" stroke-width="1.3"/><path d="M8.5 3.4 L10.75 0.6 L13 3.4" fill="none" stroke="#db5860" stroke-width="1.3"/></svg>
<div style="position:absolute;left:760px;top:261px;width:309px;height:27px;border:2px solid #d40f16;box-sizing:border-box;"></div>
<div style="position:absolute;left:1155px;top:85px;width:91px;height:24px;background:#fff;"></div>
<svg style="left:1162px;top:92px" width="11" height="12" viewBox="0 0 11 12"><path d="M5.5 0.4 L10.8 11.4 H0.2 Z" fill="#f0bf1c"/><path d="M5.5 4 V8" stroke="#5a4a0a" stroke-width="1.4"/><circle cx="5.5" cy="9.8" r="0.8" fill="#5a4a0a"/></svg>
<span class="t" style="left:1176px;top:88px;letter-spacing:-0.688px;color:#737373;">2</span>
<svg style="left:1190.5px;top:92px" width="11" height="12" viewBox="0 0 11 12"><path d="M5.5 0.4 L10.8 11.4 H0.2 Z" fill="#e3dcc0"/><path d="M5.5 4 V8" stroke="#8a8574" stroke-width="1.4"/><circle cx="5.5" cy="9.8" r="0.8" fill="#8a8574"/></svg>
<span class="t" style="left:1204.5px;top:88px;letter-spacing:-1.188px;color:#737373;">1</span>
<svg style="left:1221px;top:94px" width="10" height="7" viewBox="0 0 10 7"><path d="M0.8 6 L5 1.6 L9.2 6" fill="none" stroke="#6e6e6e" stroke-width="1.3"/></svg>
<svg style="left:1242px;top:95px" width="10" height="7" viewBox="0 0 10 7"><path d="M0.8 1 L5 5.4 L9.2 1" fill="none" stroke="#6e6e6e" stroke-width="1.3"/></svg>
<div style="position:absolute;left:1249px;top:110px;width:10px;height:298px;background:rgba(0,0,0,0.13);"></div>
<div style="position:absolute;left:1245px;top:162px;width:14px;height:2px;background:#c3a7e8;"></div>
<div style="position:absolute;left:1245px;top:182px;width:14px;height:2px;background:#c3a7e8;"></div>
<div style="position:absolute;left:1245px;top:316px;width:14px;height:2px;background:#e0c03a;"></div>
<div style="position:absolute;left:1245px;top:337px;width:14px;height:2px;background:#e0c03a;"></div>
<div style="position:absolute;left:1245px;top:512px;width:14px;height:2px;background:#e6dcae;"></div>
<div style="position:absolute;left:353px;top:715px;width:906px;height:9px;background:#e2e2e2;"></div>
<span class="t" style="left:2.5px;top:101.5px;transform-origin:0 0;transform:rotate(-90deg);letter-spacing:-0.179px;font-size:11px;">Project</span>
<svg style="left:6px;top:107.5px" width="11" height="9" viewBox="0 0 11 9"><path d="M0 0 H4 L5.2 1.4 H11 V9 H0 Z" fill="#6e6e6e"/></svg>
<span class="t" style="left:2.5px;top:236.5px;transform-origin:0 0;transform:rotate(-90deg);letter-spacing:-0.066px;font-size:11px;">Resource Manager</span>
<svg style="left:6px;top:242px" width="11" height="12" viewBox="0 0 11 12"><path d="M5.5 0 L8.6 5 H2.4 Z" fill="#6e6e6e"/><rect x="0" y="7" width="5" height="5" fill="#6e6e6e"/><circle cx="8.6" cy="9.5" r="2.5" fill="#6e6e6e"/></svg>
<span class="t" style="left:2.5px;top:489.5px;transform-origin:0 0;transform:rotate(-90deg);letter-spacing:0.040px;font-size:11px;">Structure</span>
<svg style="left:7px;top:496px" width="9" height="9" viewBox="0 0 9 9"><rect x="5" y="0" width="4" height="4" fill="#6e6e6e"/><rect x="0" y="5" width="4" height="4" fill="#6e6e6e"/><rect x="5" y="5" width="4" height="4" fill="#6e6e6e"/></svg>
<span class="t" style="left:2.5px;top:599.5px;transform-origin:0 0;transform:rotate(-90deg);letter-spacing:0.031px;font-size:11px;">Build Variants</span>
<svg style="left:6px;top:605px" width="11" height="10" viewBox="0 0 11 10"><path d="M0.4 0.4 L3 3.6 M10.6 0.4 L8 3.6" stroke="#6e6e6e" stroke-width="1.2"/><path d="M0 10 A5.5 6.6 0 0 1 11 10 Z" fill="#6e6e6e"/></svg>
<span class="t" style="left:2.5px;top:694.5px;transform-origin:0 0;transform:rotate(-90deg);letter-spacing:-0.281px;font-size:11px;">Bookmarks</span>
<svg style="left:7px;top:700px" width="9" height="11" viewBox="0 0 9 11"><path d="M0 0 H9 V11 L4.5 7 L0 11 Z" fill="#6e6e6e"/></svg>
<svg style="left:1263.6px;top:69px" width="13.6" height="9.6" viewBox="0 0 17 12"><path d="M0.8 11 Q0 4 5.4 3.4 Q8 0.6 11.4 2.2 Q13.2 3.4 13 6.2 Q14.8 6 14.4 3.6 Q13.4 2 14 0.8 Q15.2 0 15.8 1.2 Q16.6 4.4 15.6 6.4 Q14.4 8.4 12 8 Q10.4 9.4 8.4 9 L8.4 11 H6 L5.6 9.4 L3.6 9.4 L3.4 11 Z" fill="#6e6e6e"/></svg>
<span class="t" style="left:1278.8px;top:86px;transform-origin:0 0;transform:rotate(90deg);letter-spacing:0.061px;font-size:11px;">Gradle</span>
<svg style="left:1265px;top:141px" width="12" height="13" viewBox="0 0 12 13"><rect x="0.8" y="1" width="6.6" height="10.6" rx="1.2" fill="none" stroke="#6e6e6e" stroke-width="1.4"/><rect x="4" y="3.6" width="8" height="9.4" fill="#f2f2f2"/><rect x="5.4" y="4.8" width="5.6" height="7" rx="0.9" fill="none" stroke="#6e6e6e" stroke-width="1.3"/><rect x="7.4" y="9.6" width="1.6" height="1.4" fill="#6e6e6e"/></svg>
<span class="t" style="left:1278.8px;top:158.5px;transform-origin:0 0;transform:rotate(90deg);letter-spacing:-0.007px;font-size:11px;">Device Manager</span>
<svg style="left:1265.8px;top:510.8px" width="9" height="12.6" viewBox="0 0 9 12"><rect x="0.7" y="0.7" width="7.6" height="10.6" rx="1.2" fill="none" stroke="#6e6e6e" stroke-width="1.4"/><path d="M0.7 9 H8.3" stroke="#6e6e6e" stroke-width="1.2"/></svg>
<span class="t" style="left:1278.8px;top:529px;transform-origin:0 0;transform:rotate(90deg);letter-spacing:-0.221px;font-size:11px;">Device File Explorer</span>
<svg style="left:1265px;top:651px" width="12" height="12" viewBox="0 0 12 12"><path d="M3.6 2.6 H1 V11 H8.4 V8.6" fill="none" stroke="#6e6e6e" stroke-width="1.3"/><rect x="5.6" y="0.6" width="5" height="6.4" rx="0.6" fill="none" stroke="#6e6e6e" stroke-width="1.2"/></svg>
<span class="t" style="left:1278.8px;top:669px;transform-origin:0 0;transform:rotate(90deg);letter-spacing:-0.129px;font-size:11px;">Emulator</span>
<svg style="left:35px;top:731px" width="9" height="12" viewBox="0 0 9 12"><path d="M2 1 V11" stroke="#6e6e6e" stroke-width="1.6"/><path d="M7.2 1.6 V3.4 Q7.2 6 2.2 6.6" fill="none" stroke="#6e6e6e" stroke-width="1.5"/><circle cx="2" cy="1.6" r="1.6" fill="#6e6e6e"/><circle cx="2" cy="10.4" r="1.6" fill="#6e6e6e"/><circle cx="7.2" cy="1.8" r="1.6" fill="#6e6e6e"/></svg>
<span class="t" style="left:50px;top:727px;letter-spacing:-0.070px;">Version Control</span>
<svg style="left:154px;top:732px" width="11" height="9" viewBox="0 0 11 9"><path d="M0 1 H2 M3.4 1 H11 M0 4.5 H2 M3.4 4.5 H11 M0 8 H2 M3.4 8 H11" stroke="#6e6e6e" stroke-width="1.5"/></svg>
<span class="t" style="left:169px;top:727px;letter-spacing:-0.363px;">TODO</span>
<svg style="left:222px;top:731px" width="13" height="13" viewBox="0 0 13 13"><path d="M0.5 0.5 L8.5 5.5 L0.5 10.5 Z" fill="#6e6e6e"/><circle cx="9.4" cy="9.8" r="3.4" fill="#f2f2f2"/><circle cx="9.4" cy="9.8" r="2.3" fill="#3dbd4d"/></svg>
<span class="t" style="left:237px;top:727px;letter-spacing:-0.339px;">Run</span>
<svg style="left:280px;top:731px" width="10" height="10" viewBox="0 0 10 10"><circle cx="5" cy="5" r="5" fill="#6e6e6e"/><path d="M5 2.2 V5.8" stroke="#f2f2f2" stroke-width="1.5"/><circle cx="5" cy="7.6" r="0.9" fill="#f2f2f2"/></svg>
<span class="t" style="left:295px;top:727px;letter-spacing:-0.461px;">Problems</span>
<svg style="left:362px;top:729.5px" width="13" height="13" viewBox="0 0 13 13"><path d="M1.4 5.2 L6.6 1.6" stroke="#6e6e6e" stroke-width="2.8"/><path d="M4.6 4 L11.2 11" stroke="#6e6e6e" stroke-width="2.2"/></svg>
<span class="t" style="left:379px;top:727px;letter-spacing:-0.138px;">Build</span>
<svg style="left:425px;top:731px" width="12" height="11" viewBox="0 0 12 11"><rect width="12" height="11" rx="1" fill="#6e6e6e"/><path d="M2.4 3 L5 5.4 L2.4 7.8" fill="none" stroke="#f2f2f2" stroke-width="1.3"/><path d="M6 8.2 H9.6" stroke="#f2f2f2" stroke-width="1.3"/></svg>
<span class="t" style="left:442px;top:727px;letter-spacing:-0.170px;">Terminal</span>
<svg style="left:508px;top:732px" width="12" height="9" viewBox="0 0 12 9"><path d="M0 1 H12 M0 4.5 H8.4 M0 8 H10.4" stroke="#6e6e6e" stroke-width="1.6"/></svg>
<span class="t" style="left:524px;top:727px;letter-spacing:-0.339px;">Logcat</span>
<svg style="left:577px;top:732px" width="13" height="10" viewBox="0 0 13 10"><path d="M1.6 9.6 A5.2 5.2 0 0 1 8.4 1.8" fill="none" stroke="#6e6e6e" stroke-width="2"/><path d="M10 3.2 A5.2 5.2 0 0 1 11.6 9.6" fill="none" stroke="#6e6e6e" stroke-width="1.8"/><path d="M5.8 9.2 L9.4 3.4" stroke="#6e6e6e" stroke-width="1.5" stroke-linecap="round"/></svg>
<span class="t" style="left:594px;top:727px;letter-spacing:-0.127px;">Profiler</span>
<svg style="left:655px;top:730px" width="12" height="13" viewBox="0 0 12 13"><ellipse cx="6" cy="7.4" rx="3.6" ry="4.6" fill="#6e6e6e"/><path d="M3.6 2.8 A2.4 2.4 0 0 1 8.4 2.8 Z" fill="#6e6e6e"/><path d="M0.4 4.2 L3 6 M11.6 4.2 L9 6 M0 8 H3 M12 8 H9 M0.6 12 L3 10 M11.4 12 L9 10" stroke="#6e6e6e" stroke-width="1.1"/><rect x="6" y="8" width="6" height="5" fill="#f2f2f2"/><rect x="7" y="9" width="5" height="4" fill="#6e6e6e"/></svg>
<span class="t" style="left:671px;top:727px;letter-spacing:-0.099px;">App Inspection</span>
<svg style="left:1055px;top:730px" width="13" height="13" viewBox="0 0 13 13"><circle cx="6.5" cy="6.5" r="6.5" fill="#59a869"/><text x="6.5" y="10" text-anchor="middle" font-family="Liberation Sans, sans-serif" font-size="9.5" font-weight="bold" fill="#fff">1</text></svg>
<span class="t" style="left:1072.5px;top:727px;letter-spacing:-0.450px;">Event Log</span>
<svg style="left:1145px;top:730px" width="14" height="13" viewBox="0 0 14 13"><path d="M2.6 6.6 H0.6 V0.6 H9.4 V2.6" fill="none" stroke="#8c8c8c" stroke-width="1"/><path d="M6 8.6 H3 V3 H12 V5.4" fill="none" stroke="#8c8c8c" stroke-width="1"/><circle cx="9" cy="8" r="2.5" fill="none" stroke="#8c8c8c" stroke-width="1.2"/><path d="M10.8 9.8 L13.2 12.2" stroke="#8c8c8c" stroke-width="1.4"/></svg>
<span class="t" style="left:1162px;top:727px;letter-spacing:-0.233px;">Layout Inspector</span>
<svg style="left:5.5px;top:751px" width="13" height="12" viewBox="0 0 13 12"><rect x="2.5" y="0.5" width="10" height="9" fill="none" stroke="#7a7a7a" stroke-width="1"/><path d="M0.5 2.5 V11.5 H10.5" fill="none" stroke="#7a7a7a" stroke-width="1"/></svg>
<span class="t" style="left:27.5px;top:746.5px;letter-spacing:-0.125px;">Gradle build finished in 1 m 16 s 167 ms (11 minutes ago)</span>
<span class="t" style="left:973px;top:746.5px;letter-spacing:-0.606px;">13:14</span>
<span class="t" style="left:1012px;top:746.5px;letter-spacing:-1.086px;">CRLF</span>
<span class="t" style="left:1051px;top:746.5px;letter-spacing:-0.600px;">UTF-8</span>
<span class="t" style="left:1094px;top:746.5px;letter-spacing:-0.504px;">4 spaces</span>
<svg style="left:1149px;top:751px" width="12" height="11" viewBox="0 0 12 11"><rect x="3.4" y="5.4" width="7.6" height="5.4" fill="#6e6e6e"/><path d="M1 6 V3.2 A2.3 2.3 0 0 1 5.6 3.2 V5.6" fill="none" stroke="#6e6e6e" stroke-width="1.5"/></svg>
<svg style="left:1174px;top:751px" width="12" height="11" viewBox="0 0 12 11"><path d="M1 0 H11 Q12 0 12 1 V10.8 L9.4 8.4 H1 Q0 8.4 0 7.4 V1 Q0 0 1 0 Z" fill="#6e6e6e"/><path d="M6 1.6 V5" stroke="#f2f2f2" stroke-width="1.5"/><circle cx="6" cy="6.7" r="0.85" fill="#f2f2f2"/></svg>
<div style="position:absolute;left:1192px;top:747px;width:16px;height:19px;background:#c0c0c0;"></div>
<div style="position:absolute;left:1208px;top:747px;width:8px;height:19px;background:#d8d8d8;"></div>
<span class="t" style="left:1198px;top:746.5px;letter-spacing:-0.283px;">414 of 2048M</span>
<div style="position:absolute;left:915.5px;top:675px;width:337.5px;height:40.5px;background:#f4f4f4;border:1px solid #d6d6d6;border-radius:2px;box-sizing:border-box;box-shadow:0 2px 4px rgba(0,0,0,0.16);"></div>
<svg style="left:926px;top:687px" width="14" height="14" viewBox="0 0 14 14"><circle cx="7" cy="7" r="7" fill="#389fd6"/><rect x="6" y="5.8" width="2" height="5" fill="#fff"/><rect x="6" y="2.8" width="2" height="2" fill="#fff"/></svg>
<span class="t" style="left:947px;top:684.5px;letter-spacing:-0.153px;">Gradle build finished in 1 m 16 s 167 ms</span>
<span class="t" style="left:991px;top:690px;letter-spacing:-0.053px;font-size:20px;line-height:24px;height:24px;margin-top:-2px;color:rgba(120,120,120,0.42);">Activate Windows</span>
<span class="t" style="left:991px;top:712.5px;letter-spacing:-0.022px;font-size:15px;color:rgba(120,120,120,0.42);">Go to Settings to activate Windows.</span>
</body></html>
